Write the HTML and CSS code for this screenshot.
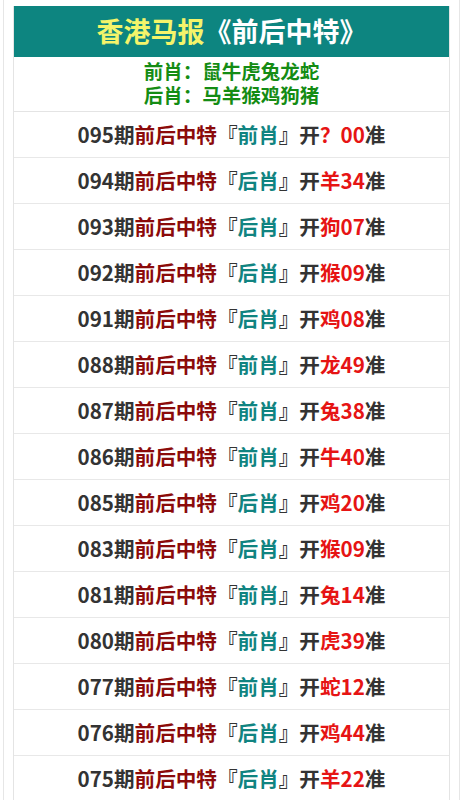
FILE: index.html
```html
<!DOCTYPE html>
<html lang="zh-CN">
<head>
    <meta charset="UTF-8">
    <meta name="viewport" content="width=device-width, initial-scale=1.0">
    <title>香港马报《前后中特》</title>
    <link rel="stylesheet" href="styles.css">
</head>
<body>
    <div class="wrap">
        <div class="board">
            <div class="title"><span class="yel">香港马报</span>《前后中特》</div>
            <div class="info">
                <div>前肖：鼠牛虎兔龙蛇</div>
                <div>后肖：马羊猴鸡狗猪</div>
            </div>
            <div class="row">095期<span class="dr">前后中特</span>『<span class="tl">前肖</span>』开<span class="rd">？00</span>准</div>
            <div class="row">094期<span class="dr">前后中特</span>『<span class="tl">后肖</span>』开<span class="rd">羊34</span>准</div>
            <div class="row">093期<span class="dr">前后中特</span>『<span class="tl">后肖</span>』开<span class="rd">狗07</span>准</div>
            <div class="row">092期<span class="dr">前后中特</span>『<span class="tl">后肖</span>』开<span class="rd">猴09</span>准</div>
            <div class="row">091期<span class="dr">前后中特</span>『<span class="tl">后肖</span>』开<span class="rd">鸡08</span>准</div>
            <div class="row">088期<span class="dr">前后中特</span>『<span class="tl">前肖</span>』开<span class="rd">龙49</span>准</div>
            <div class="row">087期<span class="dr">前后中特</span>『<span class="tl">前肖</span>』开<span class="rd">兔38</span>准</div>
            <div class="row">086期<span class="dr">前后中特</span>『<span class="tl">前肖</span>』开<span class="rd">牛40</span>准</div>
            <div class="row">085期<span class="dr">前后中特</span>『<span class="tl">后肖</span>』开<span class="rd">鸡20</span>准</div>
            <div class="row">083期<span class="dr">前后中特</span>『<span class="tl">后肖</span>』开<span class="rd">猴09</span>准</div>
            <div class="row">081期<span class="dr">前后中特</span>『<span class="tl">前肖</span>』开<span class="rd">兔14</span>准</div>
            <div class="row">080期<span class="dr">前后中特</span>『<span class="tl">前肖</span>』开<span class="rd">虎39</span>准</div>
            <div class="row">077期<span class="dr">前后中特</span>『<span class="tl">前肖</span>』开<span class="rd">蛇12</span>准</div>
            <div class="row">076期<span class="dr">前后中特</span>『<span class="tl">后肖</span>』开<span class="rd">鸡44</span>准</div>
            <div class="row">075期<span class="dr">前后中特</span>『<span class="tl">后肖</span>』开<span class="rd">羊22</span>准</div>
        </div>
    </div>
</body>
</html>
```

FILE: styles.css
```css
body {
    margin: 0;
    padding: 0;
    background-color: #fff;
    font-family: "Noto Sans CJK SC", "Noto Sans", sans-serif;
}
.wrap {
    margin: 0 4px 0 3px;
    padding: 6px 9px 0;
    border-left: 1px solid #e6e6e6;
    border-right: 1px solid #e6e6e6;
    min-height: 800px;
    box-sizing: border-box;
}
.board {
    border: 1px solid #e4e4e4;
    border-top: none;
}
.title {
    background-color: #0d8580;
    color: #fff;
    font-size: 27px;
    font-weight: bold;
    text-align: center;
    height: 51px;
    line-height: 49px;
}
.yel {
    color: #f4f46a;
}
.info {
    color: #148c14;
    font-size: 19.5px;
    font-weight: bold;
    text-align: center;
    line-height: 24px;
    padding: 2px 0 4px;
    border-bottom: 1px solid #e4e4e4;
}
.row {
    height: 45px;
    line-height: 45px;
    border-bottom: 1px solid #e8e8e8;
    text-align: center;
    font-size: 20.6px;
    font-weight: bold;
    color: #333;
}
.dr {
    color: #8b0a0a;
}
.tl {
    color: #108481;
}
.rd {
    color: #e61414;
}
```
